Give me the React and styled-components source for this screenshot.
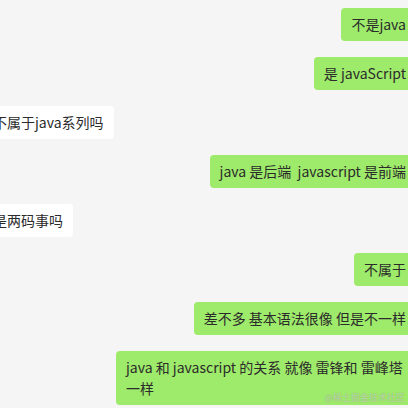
import styled, { createGlobalStyle } from 'styled-components';

const Global = createGlobalStyle`
  html, body {
    margin: 0;
    padding: 0;
    background: #f5f5f5;
    overflow: hidden;
  }
  body {
    font-family: "Noto Sans CJK SC", "Noto Sans", sans-serif;
  }
`;

const messages = [
  { id: 1, mine: true, text: '不是java' },
  { id: 2, mine: true, text: '是 javaScript' },
  { id: 3, mine: false, text: '不属于java系列吗' },
  { id: 4, mine: true, text: 'java 是后端  javascript 是前端' },
  { id: 5, mine: false, text: '是两码事吗' },
  { id: 6, mine: true, text: '不属于' },
  { id: 7, mine: true, text: '差不多 基本语法很像 但是不一样' },
  { id: 8, mine: true, text: 'java 和 javascript 的关系 就像 雷锋和 雷峰塔 一样' },
];

const App = () => {
  return (
    <>
      <Global />
      <StyledScreen>
        <StyledList>
          {messages.map((msg) => (
            <StyledBubble key={msg.id} mine={msg.mine ? 1 : 0}>
              {msg.text}
            </StyledBubble>
          ))}
        </StyledList>
        <StyledMark>@稀土掘金技术社区</StyledMark>
      </StyledScreen>
    </>
  );
};

export default App;

const StyledScreen = styled.div`
  position: relative;
  width: 408px;
  height: 408px;
  overflow: hidden;
  background: #f5f5f5;
`;

const StyledList = styled.div`
  display: flex;
  flex-direction: column;
  gap: 16px;
  padding-top: 8px;
  margin: 0 -8px 0 -17px;
`;

const StyledBubble = styled.div`
  align-self: ${(p) => (p.mine ? 'flex-end' : 'flex-start')};
  max-width: 300px;
  box-sizing: border-box;
  padding: 6px 10px;
  border-radius: 4px;
  background: ${(p) => (p.mine ? '#9eea6a' : '#ffffff')};
  color: #2b2b2b;
  font-size: 14px;
  line-height: 21px;
  white-space: pre-wrap;
`;

const StyledMark = styled.div`
  position: absolute;
  right: 3px;
  bottom: 5px;
  font-size: 9px;
  line-height: 11px;
  color: rgba(255, 255, 255, 0.55);
  text-shadow: 0 0 1px rgba(0, 0, 0, 0.35);
`;
